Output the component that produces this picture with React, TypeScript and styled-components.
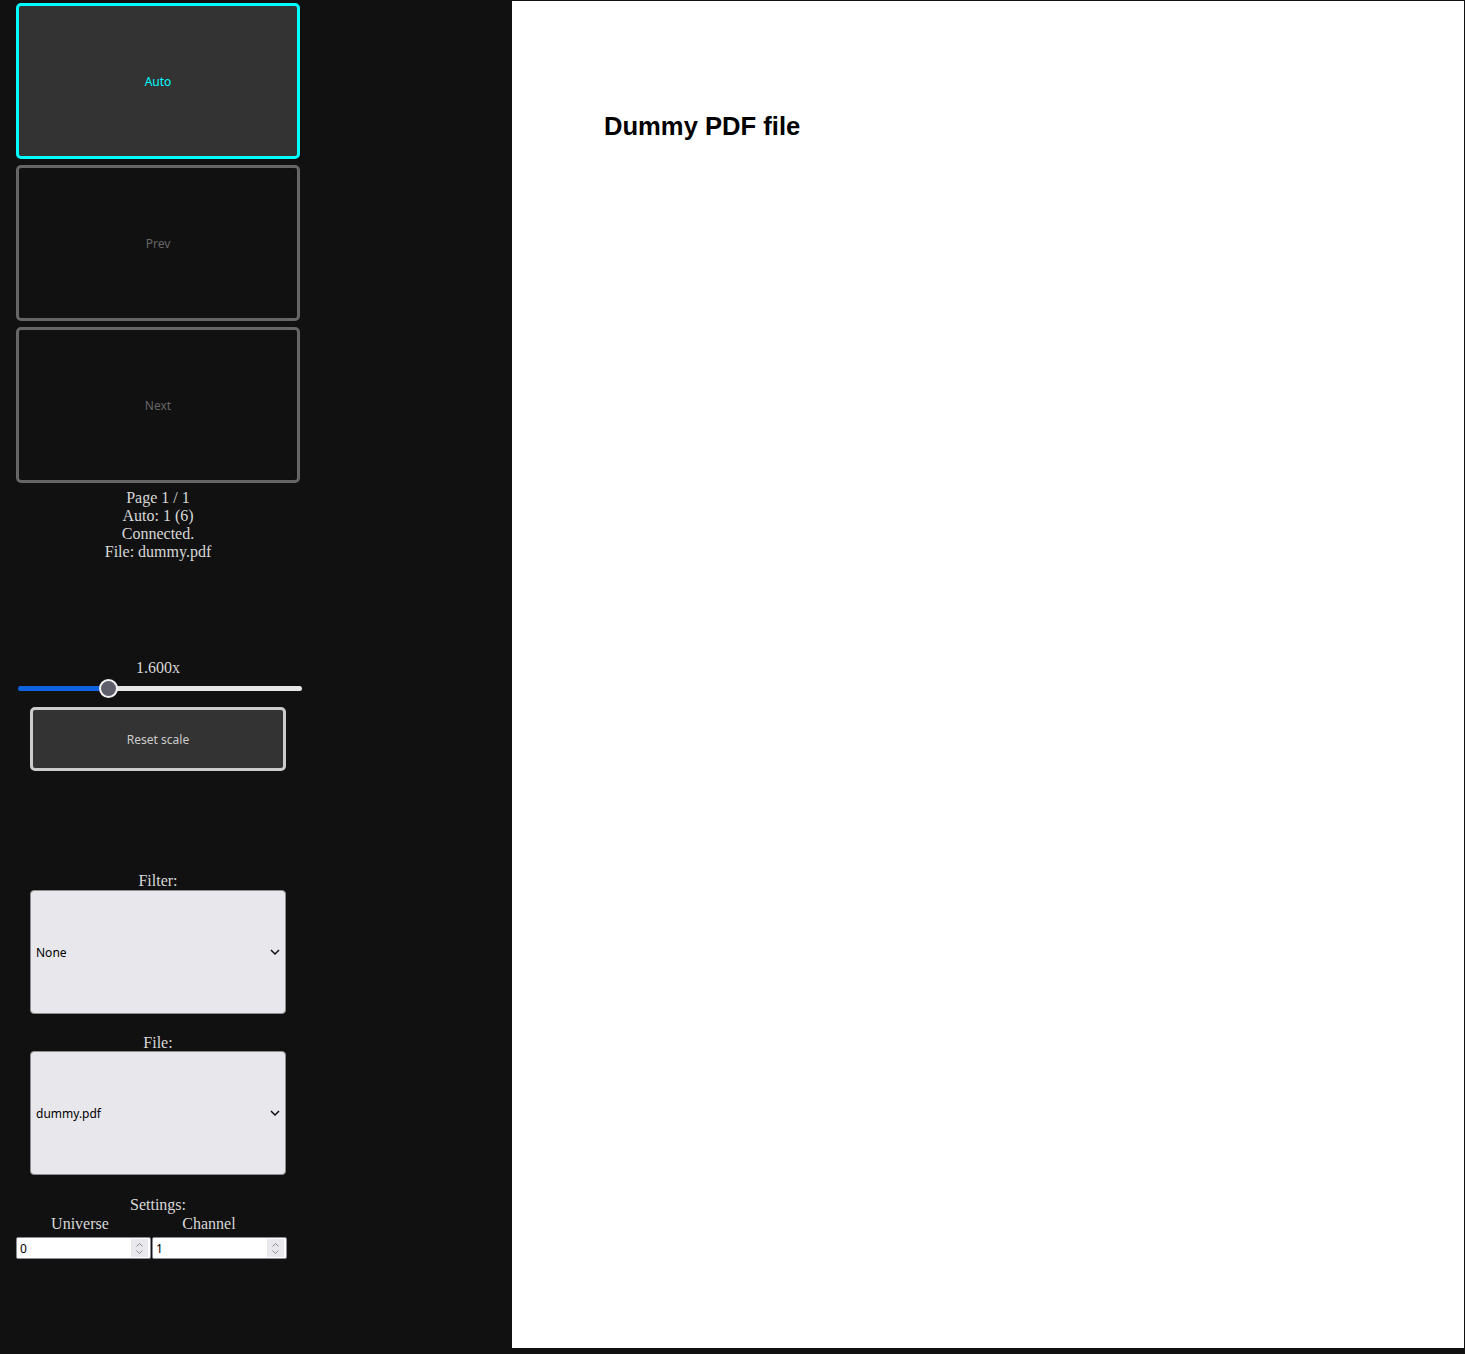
import React, { useState } from "react";
import styled, { createGlobalStyle } from "styled-components";

const Global = createGlobalStyle`
  html, body { margin: 0; padding: 0; background: #111111; }
  body { font-family: "Liberation Serif", "Times New Roman", serif; color: #d8d8d8; }
  * { box-sizing: border-box; }
`;

const Layout = styled.div`
  display: flex;
  width: 1465px;
  height: 1354px;
  background: #111111;
`;

const Sidebar = styled.div`
  width: 316px;
  padding: 3px 0 0 16px;
  display: flex;
  flex-direction: column;
  align-items: stretch;
`;

const Column = styled.div`
  width: 284px;
  display: flex;
  flex-direction: column;
  align-items: center;
`;

const NavButton = styled.button<{ $active?: boolean }>`
  width: 284px;
  height: 156px;
  margin: 0 0 6px;
  border: 3px solid ${(p) => (p.$active ? "#00ffff" : "#666666")};
  border-radius: 5px;
  background: ${(p) => (p.$active ? "#333333" : "#111111")};
  color: ${(p) => (p.$active ? "#00ffff" : "#666666")};
  font-family: "Noto Sans", "DejaVu Sans", sans-serif;
  font-size: 12px;
  padding: 0;
  cursor: pointer;
`;

const Status = styled.div`
  margin-top: 0;
  font-size: 16px;
  line-height: 18px;
  text-align: center;
  color: #d8d8d8;
`;

const ScaleLabel = styled.div`
  margin-top: 98px;
  font-size: 16px;
  line-height: 18px;
  text-align: center;
`;

const Slider = styled.input`
  -webkit-appearance: none;
  appearance: none;
  align-self: flex-start;
  width: 284px;
  height: 19px;
  margin: 2px 0 0 2px;
  background: transparent;
  &::-webkit-slider-runnable-track {
    height: 5px;
    border-radius: 3px;
    background: var(--track);
  }
  &::-webkit-slider-thumb {
    -webkit-appearance: none;
    width: 19px;
    height: 19px;
    margin-top: -7px;
    border-radius: 50%;
    background: #5e5f6b;
    border: 2px solid #f2f2f2;
  }
`;

const ResetButton = styled.button`
  width: 256px;
  height: 64px;
  margin-top: 9px;
  border: 3px solid #cccccc;
  border-radius: 5px;
  background: #333333;
  color: #cccccc;
  font-family: "Noto Sans", "DejaVu Sans", sans-serif;
  font-size: 12px;
  cursor: pointer;
`;

const FieldLabel = styled.div<{ $top: number }>`
  margin-top: ${(p) => p.$top}px;
  font-size: 16px;
  line-height: 18px;
  text-align: center;
`;

const SelectWrap = styled.div<{ $top?: number }>`
  display: grid;
  width: 256px;
  height: 124px;
  margin-top: ${(p) => p.$top ?? 0}px;
  & > * { grid-area: 1 / 1; }
`;

const Select = styled.select`
  appearance: none;
  -webkit-appearance: none;
  width: 256px;
  height: 124px;
  border: 1px solid #8d8d92;
  border-radius: 4px;
  background: #e8e7ec;
  color: #000;
  font-family: "Noto Sans", "DejaVu Sans", sans-serif;
  font-size: 12px;
  padding: 0 0 0 5px;
`;

const Chevron = styled.svg`
  justify-self: end;
  align-self: center;
  margin-right: 6px;
  pointer-events: none;
`;

const Settings = styled.div`
  align-self: flex-start;
  display: grid;
  grid-template-columns: 135px 135px;
  column-gap: 1px;
  margin-top: 1px;
`;

const ColLabel = styled.div`
  width: 128px;
  text-align: center;
  font-size: 16px;
  line-height: 18px;
  &:nth-child(2) { margin-left: -7px; }
`;

const NumberBox = styled.div`
  display: flex;
  align-items: center;
  height: 22px;
  margin-top: 4px;
  border: 1px solid #8a8a92;
  border-radius: 2px;
  background: #ffffff;
`;

const NumberInput = styled.input`
  flex: 1;
  min-width: 0;
  border: none;
  outline: none;
  background: transparent;
  font-family: "Noto Sans", "DejaVu Sans", sans-serif;
  font-size: 12px;
  color: #000;
  padding: 0 0 0 3px;
  height: 20px;
`;

const Spinner = styled.div`
  width: 17px;
  height: 18px;
  margin-right: 2px;
  background: #e9e9ed;
  display: flex;
  align-items: center;
  justify-content: center;
`;

const Main = styled.div`
  flex: 1;
  display: flex;
  justify-content: flex-end;
  padding: 1px 1px 6px 0;
`;

const Page = styled.div`
  width: 952px;
  height: 1347px;
  background: #ffffff;
  padding: 111px 0 0 92px;
`;

const PdfTitle = styled.div`
  font-family: "Liberation Sans", Arial, sans-serif;
  font-weight: bold;
  font-size: 25.6px;
  line-height: 28px;
  color: #000;
`;

const ChevronDown = () => (
  <Chevron width="10" height="6" viewBox="0 0 10 6">
    <path d="M1 1 L5 5 L9 1" fill="none" stroke="#111" strokeWidth="1.5" />
  </Chevron>
);

const SpinIcon = () => (
  <svg width="9" height="13" viewBox="0 0 9 13">
    <path d="M1.5 4.5 L4.5 1.5 L7.5 4.5" fill="none" stroke="#8a8a8a" strokeWidth="1" />
    <path d="M1.5 8.5 L4.5 11.5 L7.5 8.5" fill="none" stroke="#8a8a8a" strokeWidth="1" />
  </svg>
);

export default function App() {
  const [scale, setScale] = useState(1.6);
  const min = 0.1;
  const max = 5;
  const pct = ((scale - min) / (max - min)) * 100;
  return (
    <>
      <Global />
      <Layout>
        <Sidebar>
          <Column>
            <NavButton $active>Auto</NavButton>
            <NavButton>Prev</NavButton>
            <NavButton>Next</NavButton>
            <Status>
              Page 1 / 1
              <br />
              Auto: 1 (6)
              <br />
              Connected.
              <br />
              File: dummy.pdf
            </Status>
            <ScaleLabel>{scale.toFixed(3)}x</ScaleLabel>
            <Slider
              type="range"
              min={min}
              max={max}
              step={0.01}
              value={scale}
              onChange={(e) => setScale(parseFloat(e.target.value))}
              style={{
                ["--track" as any]: `linear-gradient(to right, #0f62e0 0%, #0f62e0 ${pct}%, #e6e6e9 ${pct}%, #e6e6e9 100%)`,
              }}
            />
            <ResetButton onClick={() => setScale(1.6)}>Reset scale</ResetButton>
            <FieldLabel $top={101}>Filter:</FieldLabel>
            <SelectWrap>
              <Select defaultValue="None">
                <option>None</option>
              </Select>
              <ChevronDown />
            </SelectWrap>
            <FieldLabel $top={20}>File:</FieldLabel>
            <SelectWrap $top={-1}>
              <Select defaultValue="dummy.pdf">
                <option>dummy.pdf</option>
              </Select>
              <ChevronDown />
            </SelectWrap>
            <FieldLabel $top={21}>Settings:</FieldLabel>
            <Settings>
              <ColLabel>Universe</ColLabel>
              <ColLabel>Channel</ColLabel>
              <NumberBox>
                <NumberInput type="text" defaultValue="0" />
                <Spinner>
                  <SpinIcon />
                </Spinner>
              </NumberBox>
              <NumberBox>
                <NumberInput type="text" defaultValue="1" />
                <Spinner>
                  <SpinIcon />
                </Spinner>
              </NumberBox>
            </Settings>
          </Column>
        </Sidebar>
        <Main>
          <Page>
            <PdfTitle>Dummy PDF file</PdfTitle>
          </Page>
        </Main>
      </Layout>
    </>
  );
}
